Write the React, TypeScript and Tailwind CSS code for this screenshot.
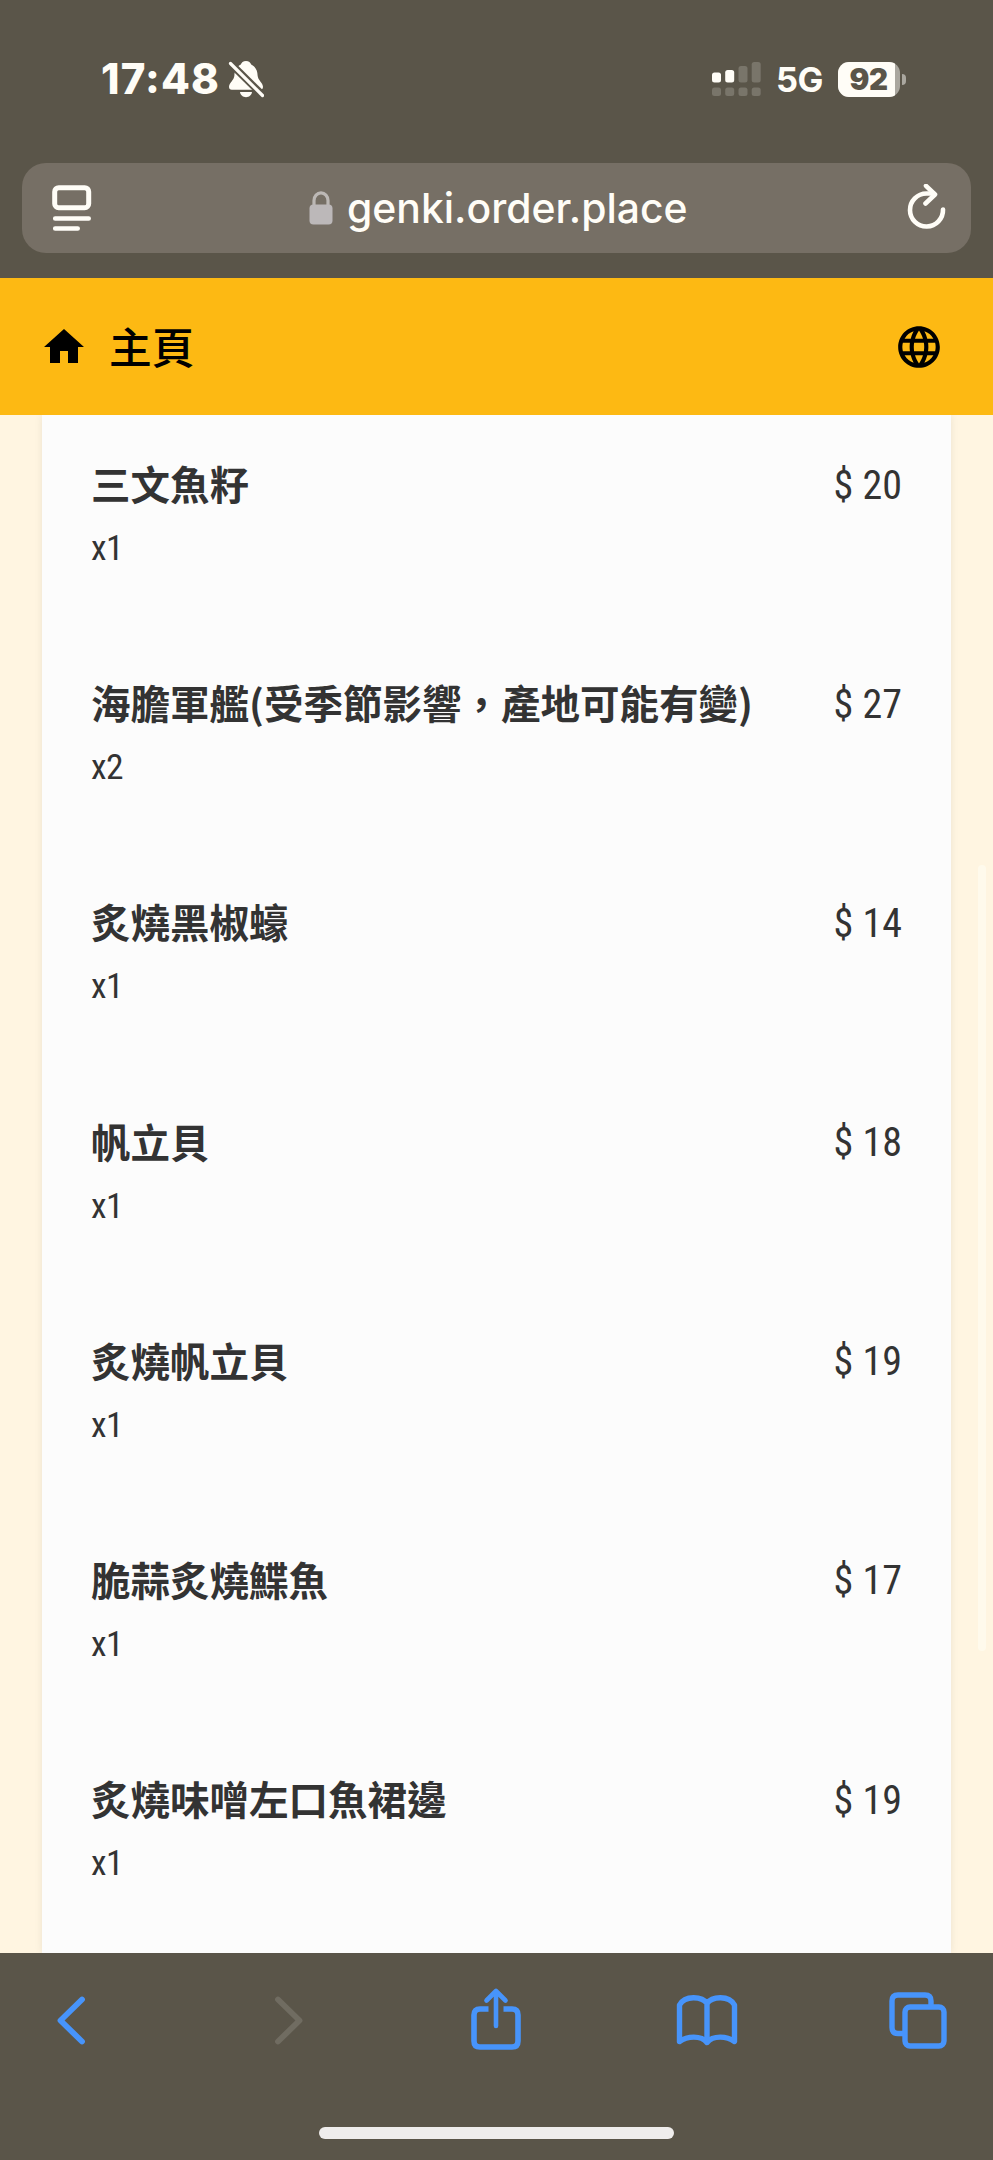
import React from 'react';
import { MdHome, MdLanguage } from 'react-icons/md';

interface OrderItem {
  name: string;
  qty: number;
  price: number;
}

const items: OrderItem[] = [
  { name: '三文魚籽', qty: 1, price: 20 },
  { name: '海膽軍艦(受季節影響，產地可能有變)', qty: 2, price: 27 },
  { name: '炙燒黑椒蠔', qty: 1, price: 14 },
  { name: '帆立貝', qty: 1, price: 18 },
  { name: '炙燒帆立貝', qty: 1, price: 19 },
  { name: '脆蒜炙燒鰈魚', qty: 1, price: 17 },
  { name: '炙燒味噌左口魚裙邊', qty: 1, price: 19 },
];

function BellOff() {
  return (
    <svg className="w-[36px] h-[38px]" viewBox="0 0 36 38" fill="none">
      <path
        d="M18 1c2.800 0 4.600 1.600 5.200 3.600C28 7 29.400 11 29.600 15.500c.2 4.500 5.400 7.500 5.400 11.300 0 1.900-1 2.900-2.800 2.900H3.800C2 29.700 1 28.700 1 26.800c0-3.800 5.200-6.800 5.400-11.300C6.600 11 8 7 12.800 4.600 13.400 2.600 15.200 1 18 1z"
        fill="#fffdf7"
      />
      <path d="M12 32h12c-.5 3.200-3 5.200-6 5.200s-5.500-2-6-5.200z" fill="#fffdf7" />
      <path d="M2.500 3.500l33 32.500" stroke="#5a5549" strokeWidth="7.400" />
      <path d="M2.500 3.500l32 32" stroke="#fffdf7" strokeWidth="3.200" strokeLinecap="round" />
    </svg>
  );
}

function Signal() {
  return (
    <svg className="w-[49px] h-[36px]" viewBox="0 0 49 36">
      <g fill="#fffdf7">
        <rect x="0" y="11.500" width="9" height="10" rx="2.500" />
        <rect x="13.200" y="9" width="9" height="12.500" rx="2.500" />
      </g>
      <g fill="#79756a">
        <rect x="26.500" y="5" width="9" height="16.500" rx="2.500" />
        <rect x="39.700" y="1" width="9" height="20.500" rx="2.500" />
        <rect x="0" y="26.500" width="9" height="8.500" rx="2.500" />
        <rect x="13.200" y="26.500" width="9" height="8.500" rx="2.500" />
        <rect x="26.500" y="26.500" width="9" height="8.500" rx="2.500" />
        <rect x="39.700" y="26.500" width="9" height="8.500" rx="2.500" />
      </g>
    </svg>
  );
}

function StatusBar() {
  return (
    <div className="h-[163px] shrink-0 flex items-start justify-between pl-[101px] pr-[87px] pt-[54px] text-[#fffdf7]">
      <div className="flex items-center h-[50px]">
        <span className="w-[120px] text-[42px] leading-[50px] font-extrabold tracking-[1.100px] whitespace-nowrap">
          17<span className="relative top-[-1px]">:</span>48
        </span>
        <div className="ml-[7px]">
          <BellOff />
        </div>
      </div>
      <div className="flex items-center h-[50px]">
        <Signal />
        <span className="ml-[15px] w-[51px] pt-[1px] text-[34.500px] font-bold leading-[50px] tracking-[-0.500px] whitespace-nowrap">5G</span>
        <div className="ml-[11px] w-[62px] h-[35px] rounded-[11px] overflow-hidden bg-[#aaa79f] flex">
          <div className="w-[57px] bg-[#fffdf7] text-[#5a5549] text-[29.500px] leading-[35px] font-black pl-[4px] text-center tracking-[-0.500px]">
            92
          </div>
        </div>
        <div className="ml-[2px] w-[4px] h-[11px] rounded-r-full bg-[#aaa79f]" />
      </div>
    </div>
  );
}

function AddressBar() {
  return (
    <div className="mx-[22px] h-[90px] shrink-0 rounded-[24px] bg-[#766f65] flex items-center justify-between pl-[30px] pr-[25px]">
      <svg className="w-[40px] h-[46px]" viewBox="0 0 40 46" fill="none" stroke="#fffdf7" strokeLinecap="round">
        <rect x="2.700" y="2.700" width="34" height="20" rx="4" strokeWidth="5" />
        <path d="M3.200 33.500h33.500M3.200 43.500h22.500" strokeWidth="4.600" />
      </svg>
      <div className="flex items-center">
        <svg className="w-[24px] h-[34px] mr-[14px] ml-[-1px]" viewBox="0 0 24 34">
          <path d="M5 15V9.500a7 7.700 0 0 1 14 0V15" fill="none" stroke="#bcb8b5" strokeWidth="3.200" />
          <rect x="0.500" y="13.500" width="23" height="20" rx="4" fill="#bcb8b9" />
        </svg>
        <span className="w-[341px] text-[40.900px] leading-[50px] font-medium text-[#fffdf7] whitespace-nowrap">
          genki.order.place
        </span>
      </div>
      <svg className="w-[40px] h-[48px]" viewBox="0 0 40 48" fill="none" stroke="#fffdf7" strokeWidth="4.600" strokeLinecap="round" strokeLinejoin="round">
        <path d="M37 25.500A16.500 16.500 0 1 1 20.500 9.500h7" />
        <path d="M20 1.800l9 8.700-9.500 9" />
      </svg>
    </div>
  );
}

function PageHeader() {
  return (
    <div className="h-[137px] shrink-0 bg-[#fdb913] flex items-center justify-between pl-[40px] pr-[49px] text-black">
      <div className="flex items-center">
        <MdHome className="w-[48px] h-[48px]" />
        <span className="ml-[21px] pt-[4px] text-[42.700px] leading-[60px] font-medium">主頁</span>
      </div>
      <MdLanguage className="w-[50px] h-[50px]" />
    </div>
  );
}

function OrderRow({ item }: { item: OrderItem }) {
  return (
    <div className="h-[219.200px] pl-[49px] pr-[49px] text-[#333333]">
      <div className="flex items-center justify-between h-[56px]">
        <h2 className="mt-[-2px] text-[39.500px] leading-[56px] font-bold whitespace-nowrap">{item.name}</h2>
        <span className="pt-[3px] font-['Roboto'] [font-stretch:75%] text-[40px] leading-[56px] whitespace-nowrap">
          $ {item.price}
        </span>
      </div>
      <p className="mt-[10px] font-['Roboto'] [font-stretch:75%] text-[35.500px] leading-[52px] tracking-[-0.500px]">x{item.qty}</p>
    </div>
  );
}

function Toolbar() {
  return (
    <div className="relative h-[207px] shrink-0">
      <div className="flex items-center pl-[56px] pt-[33px] text-[#4794fb]">
        <svg className="w-[30px] h-[70px]" viewBox="0 0 30 70" fill="none" stroke="currentColor" strokeWidth="5.800" strokeLinecap="round" strokeLinejoin="round">
          <path d="M26 13.500L4.500 34.500 26 55.500" />
        </svg>
        <svg className="w-[30px] h-[70px] ml-[188px]" viewBox="0 0 30 70" fill="none" stroke="#706c61" strokeWidth="5.800" strokeLinecap="round" strokeLinejoin="round">
          <path d="M4 13.500l21.500 21L4 55.500" />
        </svg>
        <svg className="w-[50px] h-[70px] ml-[167px]" viewBox="0 0 50 70" fill="none" stroke="currentColor" strokeWidth="5.600" strokeLinecap="round" strokeLinejoin="round">
          <path d="M17.500 23H9q-6 0-6 6v26q0 6 6 6h32q6 0 6-6V29q0-6-6-6h-8.500" strokeLinecap="butt" />
          <path d="M25 40V6M15.500 14.500L25 5l9.500 9.500" strokeWidth="4.600" />
        </svg>
        <svg className="w-[62px] h-[70px] ml-[155px]" viewBox="0 0 62 70" fill="none" stroke="currentColor" strokeWidth="5.400" strokeLinecap="round" strokeLinejoin="round">
          <path d="M31 17.500C26 10 9 9 3.500 19v36.500C11 50 25 49 31 56.500c6-7.500 20-6.500 27.500-1V19C53 9 36 10 31 17.500zM31 17.500v39" />
        </svg>
        <svg className="w-[58px] h-[70px] ml-[151px]" viewBox="0 0 58 70" fill="none" stroke="currentColor" strokeWidth="5.400">
          <rect x="16" y="21" width="39" height="39" rx="5" />
          <path d="M42 21V15q0-6-6-6H9q-6 0-6 6v26.500q0 6 6 6h7" />
        </svg>
      </div>
      <div className="absolute left-[319px] bottom-[21px] w-[355px] h-[12px] rounded-full bg-[#efedec]" />
    </div>
  );
}

export default function App() {
  return (
    <div className="w-[993px] h-[2160px] overflow-hidden flex flex-col bg-[#5a5549] font-['Inter','Noto_Sans_CJK_TC',sans-serif]">
      <StatusBar />
      <AddressBar />
      <div className="h-[25px] shrink-0" />
      <PageHeader />
      <div className="relative flex-1 min-h-0 overflow-hidden bg-[#fff5e1] pl-[42px] pr-[42px]">
        <div className="h-full pt-[41px] bg-[#fcfcfc] shadow-[0_0_8px_rgba(0,0,0,0.080)] font-['Noto_Sans_CJK_TC',sans-serif]">
          {items.map((item) => (
            <OrderRow key={item.name} item={item} />
          ))}
        </div>
        {/* scroll indicator */}
        <div className="absolute right-[7px] top-[450px] w-[8px] h-[786px] rounded-full bg-[#fffaec]" />
      </div>
      <Toolbar />
    </div>
  );
}
